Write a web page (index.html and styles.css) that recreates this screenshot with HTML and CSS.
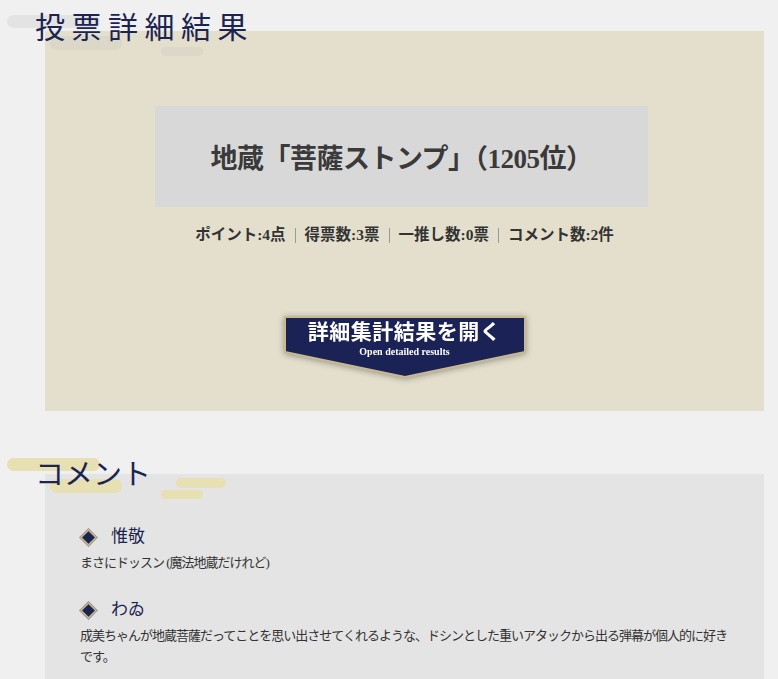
FILE: index.html
```html
<!DOCTYPE html>
<html lang="ja">
<head>
<meta charset="utf-8">
<link rel="stylesheet" href="styles.css">
</head>
<body>
<section class="sec">
  <h2 class="sec-title">
    <span class="pill pill-a gray"></span>
    <span class="pill pill-b gray faint"></span>
    <span class="pill pill-d gray faint"></span>
    <span class="title-text spaced">投票詳細結果</span>
  </h2>
  <div class="panel beige">
    <div class="name-box">地蔵「菩薩ストンプ」（1205位）</div>
    <p class="stats">ポイント:4点<span class="sep"></span>得票数:3票<span class="sep"></span>一推し数:0票<span class="sep"></span>コメント数:2件</p>
    <div class="btn">
      <svg class="btn-bg" width="244" height="66" viewBox="0 0 244 66">
        <polygon points="2,2 242,2 242,37 122,62 2,37" fill="#1b2256" stroke="#c9b98e" stroke-width="2"/>
      </svg>
      <span class="btn-main">詳細集計結果を開く</span>
      <span class="btn-sub">Open detailed results</span>
    </div>
  </div>
</section>
<section class="sec sec2">
  <h2 class="sec-title">
    <span class="pill pill-a yellow"></span>
    <span class="pill pill-b yellow"></span>
    <span class="pill pill-c yellow"></span>
    <span class="pill pill-d yellow"></span>
    <span class="title-text">コメント</span>
  </h2>
  <div class="panel gray-panel">
    <div class="comment">
      <div class="c-name"><span class="dia"></span>惟敬</div>
      <p class="c-text">まさにドッスン&nbsp;(魔法地蔵だけれど)</p>
    </div>
    <div class="comment">
      <div class="c-name"><span class="dia"></span>わゐ</div>
      <p class="c-text">成美ちゃんが地蔵菩薩だってことを思い出させてくれるような、ドシンとした重いアタックから出る弾幕が個人的に好きです。</p>
    </div>
  </div>
</section>
</body>
</html>
```
FILE: styles.css
```css
html, body {
  margin: 0;
  padding: 0;
  background: #f0f0f0;
  font-family: "Liberation Serif", "Noto Sans CJK JP", serif;
  color: #333;
}
.sec {
  position: relative;
}
.sec-title {
  position: relative;
  margin: 0;
  height: 31px;
  font-weight: normal;
  z-index: 1;
}
.title-text {
  position: relative;
  display: block;
  padding: 11px 0 0 35px;
  font-size: 30px;
  line-height: 34px;
  color: #1c2451;
  white-space: nowrap;
}
.spaced {
  letter-spacing: 6.5px;
}
.pill {
  position: absolute;
  border-radius: 7px;
  height: 13px;
}
.pill-a { left: 7px; top: 15px; width: 93px; }
.pill-b { left: 50px; top: 36px; width: 72px; height: 14px; }
.pill-c { left: 176px; top: 35px; width: 50px; height: 10px; border-radius: 5px; }
.pill-d { left: 161px; top: 47px; width: 42px; height: 9px; border-radius: 5px; }
.gray { background: #e3e3e3; }
.gray.faint { background: rgba(190, 190, 190, 0.25); }
.yellow { background: #e6e0b3; }

.panel {
  margin-left: 45px;
  width: 719px;
}
.beige {
  background: #e4dfcc;
  height: 380px;
  padding-top: 75px;
  box-sizing: border-box;
  display: flex;
  flex-direction: column;
  align-items: center;
}
.name-box {
  width: 493px;
  height: 101px;
  background: #d8d8d8;
  display: flex;
  align-items: center;
  justify-content: center;
  font-size: 27px;
  font-weight: bold;
  color: #3a3a3a;
  margin-left: -6px;
  letter-spacing: -0.5px;
}
.stats {
  margin: 18px 0 0;
  font-size: 15.5px;
  font-weight: bold;
  color: #333;
  line-height: 20px;
  display: flex;
  align-items: center;
}
.sep {
  display: inline-block;
  width: 1px;
  height: 15px;
  background: #9a9a9a;
  margin: 0 9px;
}
.btn {
  position: relative;
  margin-top: 70px;
  width: 244px;
  height: 66px;
  display: flex;
  flex-direction: column;
  align-items: center;
  filter: drop-shadow(0 1px 3px rgba(0,0,0,0.35));
}
.btn-bg {
  position: absolute;
  left: 0;
  top: 0;
}
.btn-main {
  position: relative;
  color: #fff;
  font-size: 21px;
  font-weight: bold;
  line-height: 24px;
  margin-top: 5px;
  letter-spacing: 0.5px;
}
.btn-sub {
  position: relative;
  color: #fff;
  font-size: 10px;
  font-weight: bold;
  line-height: 12px;
  margin-top: 2px;
}
.sec2 {
  margin-top: 32px;
}
.sec2 .title-text {
  padding-top: 15px;
  font-size: 29px;
}
.gray-panel {
  background: #e4e4e4;
  padding: 52px 32px 20px 35px;
  box-sizing: border-box;
  min-height: 220px;
}
.comment {
  margin-bottom: 26px;
}
.c-name {
  display: flex;
  align-items: center;
  font-size: 17px;
  line-height: 22px;
  color: #1c2451;
  font-weight: normal;
}
.dia {
  width: 9px;
  height: 9px;
  background: #1c2451;
  border: 2px solid #c2b391;
  transform: rotate(45deg);
  margin: 0 16px 0 2px;
}
.c-text {
  margin: 4px 0 0;
  font-size: 13px;
  line-height: 21px;
  letter-spacing: -1px;
  color: #333;
}
```
